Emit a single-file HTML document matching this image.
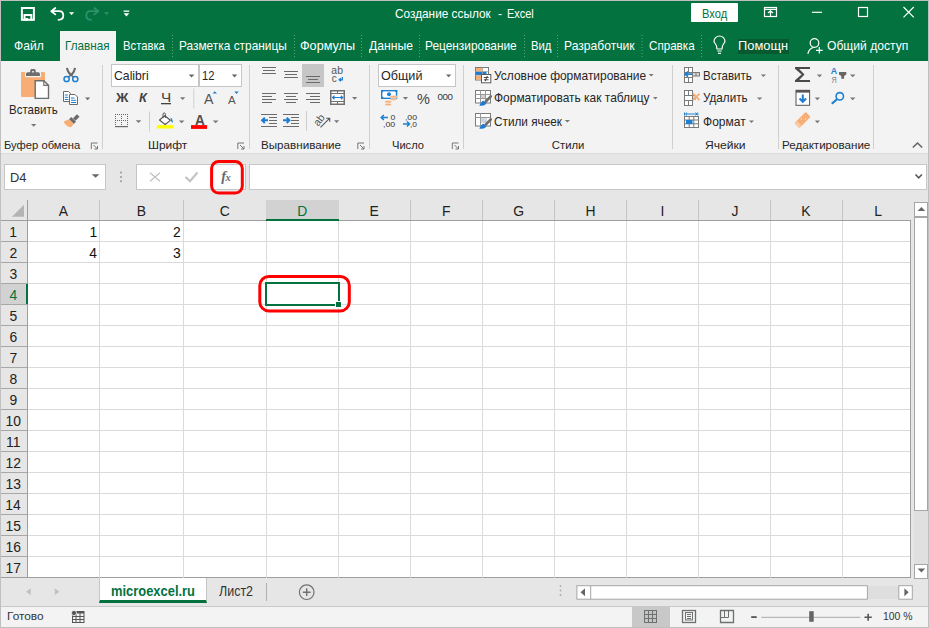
<!DOCTYPE html>
<html><head><meta charset="utf-8">
<style>
*{margin:0;padding:0;box-sizing:border-box}
html,body{width:929px;height:628px;overflow:hidden;background:#e6e6e6;font-family:"Liberation Sans",sans-serif;position:relative}
.a{position:absolute}
.t{position:absolute;white-space:nowrap;line-height:1}
svg{position:absolute;overflow:visible}
</style></head><body>
<!-- title + tabs -->
<div class="a" style="left:0;top:0;width:929px;height:61px;background:#03723f"></div>
<div class="a" style="left:690.7px;top:3px;width:47px;height:18.5px;background:#fff;border-radius:1px"></div>
<div class="a" style="left:60px;top:31px;width:56px;height:30px;background:#f3f3f3"></div>
<div class="a" style="left:738px;top:38.5px;width:50.5px;height:15px;background:#065a2f"></div>
<!-- ribbon -->
<div class="a" style="left:0;top:61px;width:929px;height:92px;background:#f3f3f3"></div>
<div class="a" style="left:0;top:153px;width:929px;height:1px;background:#dcdcdc"></div>
<!-- ribbon separators -->
<div class="a" style="left:102px;top:65px;width:1px;height:84px;background:#cfcfcf"></div>
<div class="a" style="left:249px;top:65px;width:1px;height:84px;background:#cfcfcf"></div>
<div class="a" style="left:369px;top:65px;width:1px;height:84px;background:#cfcfcf"></div>
<div class="a" style="left:463px;top:65px;width:1px;height:84px;background:#cfcfcf"></div>
<div class="a" style="left:672px;top:65px;width:1px;height:84px;background:#cfcfcf"></div>
<div class="a" style="left:778px;top:65px;width:1px;height:84px;background:#cfcfcf"></div>
<div class="a" style="left:873px;top:65px;width:1px;height:84px;background:#cfcfcf"></div>
<!-- font boxes -->
<div class="a" style="left:111px;top:64px;width:88px;height:23px;background:#fff;border:1px solid #c6c6c6"></div>
<div class="a" style="left:199px;top:64px;width:43px;height:23px;background:#fff;border:1px solid #c6c6c6"></div>
<div class="a" style="left:378px;top:64px;width:78px;height:23px;background:#fff;border:1px solid #c6c6c6"></div>
<!-- formula bar -->
<div class="a" style="left:4px;top:164px;width:102px;height:26px;background:#fff;border:1px solid #c6c6c6"></div>
<div class="a" style="left:136px;top:164px;width:110px;height:26px;background:#fff;border:1px solid #c6c6c6"></div>
<div class="a" style="left:249px;top:164px;width:678px;height:26px;background:#fff;border:1px solid #c6c6c6"></div>
<!-- grid -->
<div class="a" style="left:0;top:200px;width:911px;height:21px;background:#e6e6e6"></div>
<div class="a" style="left:28px;top:221px;width:882px;height:357px;background:#fff"></div>
<div class="a" style="left:0;top:221px;width:28px;height:357px;background:#e6e6e6"></div>
<div class="a" style="left:27px;top:200px;width:1px;height:378px;background:#9e9e9e"></div>
<div class="a" style="left:0;top:220px;width:910px;height:1px;background:#9e9e9e"></div>
<div class="a" style="left:910px;top:220px;width:1px;height:358px;background:#9e9e9e"></div>
<div class="a" style="left:0;top:577px;width:911px;height:1px;background:#9e9e9e"></div>
<!-- header separators -->
<div id="hsep"></div>
<div class="a" style="left:99px;top:221px;width:1px;height:357px;background:#dadada"></div>
<div class="a" style="left:99px;top:200px;width:1px;height:20px;background:#c4c4c4"></div>
<div class="a" style="left:183px;top:221px;width:1px;height:357px;background:#dadada"></div>
<div class="a" style="left:183px;top:200px;width:1px;height:20px;background:#c4c4c4"></div>
<div class="a" style="left:266px;top:221px;width:1px;height:357px;background:#dadada"></div>
<div class="a" style="left:266px;top:200px;width:1px;height:20px;background:#c4c4c4"></div>
<div class="a" style="left:338px;top:221px;width:1px;height:357px;background:#dadada"></div>
<div class="a" style="left:338px;top:200px;width:1px;height:20px;background:#c4c4c4"></div>
<div class="a" style="left:410px;top:221px;width:1px;height:357px;background:#dadada"></div>
<div class="a" style="left:410px;top:200px;width:1px;height:20px;background:#c4c4c4"></div>
<div class="a" style="left:482px;top:221px;width:1px;height:357px;background:#dadada"></div>
<div class="a" style="left:482px;top:200px;width:1px;height:20px;background:#c4c4c4"></div>
<div class="a" style="left:554px;top:221px;width:1px;height:357px;background:#dadada"></div>
<div class="a" style="left:554px;top:200px;width:1px;height:20px;background:#c4c4c4"></div>
<div class="a" style="left:626px;top:221px;width:1px;height:357px;background:#dadada"></div>
<div class="a" style="left:626px;top:200px;width:1px;height:20px;background:#c4c4c4"></div>
<div class="a" style="left:698px;top:221px;width:1px;height:357px;background:#dadada"></div>
<div class="a" style="left:698px;top:200px;width:1px;height:20px;background:#c4c4c4"></div>
<div class="a" style="left:770px;top:221px;width:1px;height:357px;background:#dadada"></div>
<div class="a" style="left:770px;top:200px;width:1px;height:20px;background:#c4c4c4"></div>
<div class="a" style="left:842px;top:221px;width:1px;height:357px;background:#dadada"></div>
<div class="a" style="left:842px;top:200px;width:1px;height:20px;background:#c4c4c4"></div>
<div class="a" style="left:28px;top:241px;width:882px;height:1px;background:#dadada"></div>
<div class="a" style="left:1px;top:241px;width:26px;height:1px;background:#a8a8a8"></div>
<div class="a" style="left:28px;top:262px;width:882px;height:1px;background:#dadada"></div>
<div class="a" style="left:1px;top:262px;width:26px;height:1px;background:#a8a8a8"></div>
<div class="a" style="left:28px;top:283px;width:882px;height:1px;background:#dadada"></div>
<div class="a" style="left:1px;top:283px;width:26px;height:1px;background:#a8a8a8"></div>
<div class="a" style="left:28px;top:304px;width:882px;height:1px;background:#dadada"></div>
<div class="a" style="left:1px;top:304px;width:26px;height:1px;background:#a8a8a8"></div>
<div class="a" style="left:28px;top:325px;width:882px;height:1px;background:#dadada"></div>
<div class="a" style="left:1px;top:325px;width:26px;height:1px;background:#a8a8a8"></div>
<div class="a" style="left:28px;top:346px;width:882px;height:1px;background:#dadada"></div>
<div class="a" style="left:1px;top:346px;width:26px;height:1px;background:#a8a8a8"></div>
<div class="a" style="left:28px;top:367px;width:882px;height:1px;background:#dadada"></div>
<div class="a" style="left:1px;top:367px;width:26px;height:1px;background:#a8a8a8"></div>
<div class="a" style="left:28px;top:388px;width:882px;height:1px;background:#dadada"></div>
<div class="a" style="left:1px;top:388px;width:26px;height:1px;background:#a8a8a8"></div>
<div class="a" style="left:28px;top:409px;width:882px;height:1px;background:#dadada"></div>
<div class="a" style="left:1px;top:409px;width:26px;height:1px;background:#a8a8a8"></div>
<div class="a" style="left:28px;top:430px;width:882px;height:1px;background:#dadada"></div>
<div class="a" style="left:1px;top:430px;width:26px;height:1px;background:#a8a8a8"></div>
<div class="a" style="left:28px;top:451px;width:882px;height:1px;background:#dadada"></div>
<div class="a" style="left:1px;top:451px;width:26px;height:1px;background:#a8a8a8"></div>
<div class="a" style="left:28px;top:472px;width:882px;height:1px;background:#dadada"></div>
<div class="a" style="left:1px;top:472px;width:26px;height:1px;background:#a8a8a8"></div>
<div class="a" style="left:28px;top:493px;width:882px;height:1px;background:#dadada"></div>
<div class="a" style="left:1px;top:493px;width:26px;height:1px;background:#a8a8a8"></div>
<div class="a" style="left:28px;top:514px;width:882px;height:1px;background:#dadada"></div>
<div class="a" style="left:1px;top:514px;width:26px;height:1px;background:#a8a8a8"></div>
<div class="a" style="left:28px;top:535px;width:882px;height:1px;background:#dadada"></div>
<div class="a" style="left:1px;top:535px;width:26px;height:1px;background:#a8a8a8"></div>
<div class="a" style="left:28px;top:556px;width:882px;height:1px;background:#dadada"></div>
<div class="a" style="left:1px;top:556px;width:26px;height:1px;background:#a8a8a8"></div>
<!-- selected D header / row 4 header -->
<div class="a" style="left:266px;top:200px;width:73px;height:21px;background:#d2d2d2;border-bottom:2px solid #03723f"></div>
<div class="a" style="left:1px;top:284px;width:27px;height:20px;background:#d2d2d2;border-right:2px solid #03723f"></div>
<!-- selection -->
<div class="a" style="left:265px;top:282px;width:75px;height:24px;border:2px solid #03723f"></div>
<div class="a" style="left:336px;top:302px;width:5px;height:5px;background:#03723f;outline:1px solid #fff"></div>
<!-- sheet tabs -->
<div class="a" style="left:0;top:578px;width:929px;height:28px;background:#e6e6e6"></div>
<div class="a" style="left:99px;top:578px;width:108px;height:25px;background:#fff;border-left:1px solid #c6c6c6;border-right:1px solid #c6c6c6;border-bottom:3px solid #03723f"></div>
<div class="a" style="left:265.5px;top:583px;width:1px;height:18px;background:#b0b0b0"></div>
<!-- status -->
<div class="a" style="left:0;top:606px;width:929px;height:22px;background:#f3f3f3;border-top:1px solid #c9c9c9"></div>
<div class="a" style="left:632px;top:606px;width:38px;height:21px;background:#c8c8c8"></div>
<svg width="929" height="628" style="left:0;top:0" viewBox="0 0 929 628">
<!-- QAT -->
<g stroke="#fff" fill="none" stroke-width="2">
 <rect x="21.9" y="8" width="12" height="11.8"/>
 <path d="M24.5 20.5 V15 H31.3 V20.5"/>
</g>
<rect x="25.5" y="18" width="2.6" height="3" fill="#fff"/>
<g stroke="#fff" fill="none" stroke-width="1.8" stroke-linecap="round" stroke-linejoin="round">
 <path d="M51.3 11.2 L55.3 8 M51.3 11.2 L55.3 14.4 M51.5 11.2 H59 Q63.3 11.2 63.3 15.5 Q63.3 19.8 58.5 19.8"/>
</g>
<path d="M69 12.3 H74.2 L71.6 15.1Z" fill="#fff"/>
<g stroke="#2f906c" fill="none" stroke-width="1.8" stroke-linecap="round" stroke-linejoin="round">
 <path d="M98.3 11.2 L94.3 8 M98.3 11.2 L94.3 14.4 M98.1 11.2 H90.6 Q86.3 11.2 86.3 15.5 Q86.3 19.8 91.1 19.8"/>
</g>
<path d="M104 12.3 H109.2 L106.6 15.1Z" fill="#2f906c"/>
<rect x="123.6" y="10.5" width="5.7" height="1.3" fill="#fff"/>
<path d="M123.6 13.2 H129.3 L126.45 16.6Z" fill="#fff"/>
<!-- window controls -->
<g stroke="#fff" fill="none" stroke-width="1.2">
 <rect x="764.5" y="7.5" width="12" height="9"/>
 <path d="M764.5 9.3 H776.5 M770.5 11 V16.5 M768 13 L770.5 10.8 L773 13"/>
 <path d="M811.9 12.3 H822"/>
 <rect x="858.5" y="7.5" width="9" height="9"/>
 <path d="M903.5 7 L913.8 17.3 M913.8 7 L903.5 17.3"/>
</g>
<!-- tab separators -->
<g stroke="#5c9f78" stroke-width="1" stroke-dasharray="1 2">
 <path d="M172.5 35 V57 M294.5 35 V57 M361.5 35 V57 M419.5 35 V57 M524.5 35 V57 M557.5 35 V57 M642 35 V57 M701.5 35 V57"/>
</g>
<!-- lightbulb -->
<g stroke="#fff" fill="none" stroke-width="1.2">
 <path d="M717 49 Q717 46 715.5 44 Q714 42 714 41.5 A5.5 5.5 0 1 1 725 41.5 Q725 42 723.5 44 Q722 46 722 49 Z"/>
 <path d="M717.3 51 H721.7 M718 53.3 H721"/>
</g>
<!-- person -->
<g stroke="#fff" fill="none" stroke-width="1.2">
 <circle cx="814.5" cy="43" r="4.3"/>
 <path d="M807.8 53.8 Q809 48.5 813.5 47.5"/>
 <path d="M819.3 47 V53.5 M816 50.3 H822.7"/>
</g>

<!-- ===== Ribbon: clipboard ===== -->
<rect x="21" y="72" width="24" height="25" rx="1" fill="#f8ad74"/>
<rect x="25" y="71.5" width="16" height="5.8" rx="1" fill="#f3f3f3"/>
<path d="M26 73.8 Q26 72.2 27.6 72.2 H30.2 V70.6 Q30.2 69.1 31.7 69.1 H34.2 Q35.7 69.1 35.7 70.6 V72.2 H38.3 Q39.9 72.2 39.9 73.8 V75.9 H26Z" fill="#6b6e6b"/>
<rect x="32.2" y="70.9" width="1.6" height="1.6" fill="#f3f3f3"/>
<path d="M35.2 80.7 H43.8 L48.5 85.4 V98.4 H35.2Z" fill="#fff" stroke="#6b6e6b" stroke-width="1.4"/>
<path d="M43.8 80.8 V85.4 H48.4" fill="none" stroke="#6b6e6b" stroke-width="1.1"/>
<path d="M31 124 H36.3 L33.65 126.8Z" fill="#777"/>
<!-- scissors -->
<g fill="none">
 <path d="M67 67.8 Q67.5 72 71 75 Q74.5 72 75 67.8" stroke="#6b6b6b" stroke-width="2"/>
 <path d="M71 75 L68.5 77.2 M71 75 L73.5 77.2" stroke="#6b6b6b" stroke-width="1.6"/>
 <circle cx="66.6" cy="79" r="2.6" stroke="#1e80d0" stroke-width="1.5"/>
 <circle cx="75.3" cy="79" r="2.6" stroke="#1e80d0" stroke-width="1.5"/>
</g>
<!-- copy -->
<path d="M63.5 91.5 H68.5 L70.5 93.5 V101.5 H63.5Z" fill="#fff" stroke="#6b6b6b" stroke-width="1"/>
<path d="M69.5 94.5 H75 L77.5 97 V104.5 H69.5Z" fill="#fff" stroke="#6b6b6b" stroke-width="1"/>
<g fill="#1e80d0">
 <rect x="64.8" y="94.5" width="3" height="1"/><rect x="64.8" y="96.8" width="3.5" height="1"/><rect x="64.8" y="99" width="3.5" height="1"/>
 <rect x="71" y="97.5" width="3.5" height="1"/><rect x="71" y="99.8" width="5.2" height="1"/><rect x="71" y="102" width="5.2" height="1"/>
</g>
<path d="M85 97.6 H90.2 L87.6 100.2Z" fill="#6b6b6b"/>
<!-- format painter -->
<path d="M77 114.3 L79.5 116.8 L75.5 120.8 L73 118.3Z" fill="#6b6b6b"/>
<path d="M71.2 117 L76 121.8 L73.8 124 L69 119.2Z" fill="#6b6b6b"/>
<path d="M69 119.2 L73.8 124 L71 127.3 Q67.5 127 65.5 124.5 Q64 123 63.6 121.8 L65 121Z" fill="#f8ad74"/>
<!-- launcher -->
<g stroke="#777" fill="none" stroke-width="1">
 <path d="M91.3 149 V143 H97.5 M93.5 145 L97.5 149 M97.5 146 V149 H94.5"/>
 <path d="M237.8 149 V143 H244 M240 145 L244 149 M244 146 V149 H241"/>
 <path d="M357.8 149 V143 H364 M360 145 L364 149 M364 146 V149 H361"/>
 <path d="M452.3 149 V143 H458.5 M454.5 145 L458.5 149 M458.5 146 V149 H455.5"/>
</g>

<!-- ===== Font group ===== -->
<path d="M188.7 74.6 H194.4 L191.55 77.4Z" fill="#666"/>
<path d="M231.8 74.6 H237.3 L234.55 77.4Z" fill="#666"/>
<path d="M180 97.2 H185.3 L182.65 100Z" fill="#777"/>
<rect x="193.3" y="88.5" width="1" height="20" fill="#d0d0d0"/>
<rect x="149" y="111.5" width="1" height="20" fill="#d0d0d0"/>
<rect x="161" y="103" width="10" height="1.3" fill="#444"/>
<path d="M212.6 93.6 L214.8 91.2 L217 93.6Z" fill="#1e7bd0"/>
<path d="M234.3 91.4 H238.7 L236.5 93.9Z" fill="#1e7bd0"/>
<!-- borders icon -->
<g fill="#666"><rect x="115" y="114" width="1" height="1"/><rect x="115" y="120" width="1" height="1"/><rect x="117" y="114" width="1" height="1"/><rect x="117" y="120" width="1" height="1"/><rect x="119" y="114" width="1" height="1"/><rect x="119" y="120" width="1" height="1"/><rect x="121" y="114" width="1" height="1"/><rect x="121" y="120" width="1" height="1"/><rect x="123" y="114" width="1" height="1"/><rect x="123" y="120" width="1" height="1"/><rect x="125" y="114" width="1" height="1"/><rect x="125" y="120" width="1" height="1"/><rect x="127" y="114" width="1" height="1"/><rect x="127" y="120" width="1" height="1"/><rect x="115" y="116" width="1" height="1"/><rect x="121" y="116" width="1" height="1"/><rect x="127" y="116" width="1" height="1"/><rect x="115" y="118" width="1" height="1"/><rect x="121" y="118" width="1" height="1"/><rect x="127" y="118" width="1" height="1"/><rect x="115" y="120" width="1" height="1"/><rect x="121" y="120" width="1" height="1"/><rect x="127" y="120" width="1" height="1"/><rect x="115" y="122" width="1" height="1"/><rect x="121" y="122" width="1" height="1"/><rect x="127" y="122" width="1" height="1"/><rect x="115" y="124" width="1" height="1"/><rect x="121" y="124" width="1" height="1"/><rect x="127" y="124" width="1" height="1"/></g>
<rect x="115" y="126" width="13" height="1.2" fill="#6b6b6b"/>
<path d="M135.7 120.3 H141.3 L138.5 123.1Z" fill="#777"/>
<!-- fill color -->
<path d="M164.8 115.8 L170.3 120.3 L165.2 124.5 L159.5 120Z" fill="#fff" stroke="#555" stroke-width="1.1" stroke-linejoin="round"/>
<path d="M163 118 V114.2 Q163 113 164.2 113 Q165.4 113 165.4 114.2 V118" fill="none" stroke="#555" stroke-width="1"/>
<path d="M170.5 117.5 Q173.3 119.5 172.6 123 Q170.5 121.5 170.5 117.5Z" fill="#1e80d0"/>
<rect x="156.8" y="125.1" width="16.4" height="3.4" fill="#ffff00"/>
<path d="M178.9 120.5 H184.4 L181.65 123.3Z" fill="#777"/>
<!-- font color -->
<rect x="191" y="125.1" width="16.1" height="3.8" fill="#ff0000"/>
<path d="M212.8 120.5 H218.5 L215.65 123.3Z" fill="#777"/>

<!-- ===== Alignment ===== -->
<rect x="302" y="64" width="22" height="23" fill="#c6c6c6"/>
<rect x="262" y="67" width="14" height="1" fill="#6b6b6b"/>
<rect x="263" y="70" width="12" height="1" fill="#6b6b6b"/>
<rect x="262" y="73" width="14" height="1" fill="#6b6b6b"/>
<rect x="284" y="71" width="14" height="1" fill="#6b6b6b"/>
<rect x="285" y="74" width="12" height="1" fill="#6b6b6b"/>
<rect x="284" y="77" width="14" height="1" fill="#6b6b6b"/>
<rect x="306" y="76" width="14" height="1" fill="#6b6b6b"/>
<rect x="308" y="79" width="10" height="1" fill="#6b6b6b"/>
<rect x="306" y="82" width="14" height="1" fill="#6b6b6b"/>
<rect x="262" y="93" width="14" height="1" fill="#6b6b6b"/>
<rect x="262" y="96" width="10" height="1" fill="#6b6b6b"/>
<rect x="262" y="99" width="14" height="1" fill="#6b6b6b"/>
<rect x="262" y="102" width="10" height="1" fill="#6b6b6b"/>
<rect x="284" y="93" width="14" height="1" fill="#6b6b6b"/>
<rect x="286" y="96" width="10" height="1" fill="#6b6b6b"/>
<rect x="284" y="99" width="14" height="1" fill="#6b6b6b"/>
<rect x="286" y="102" width="10" height="1" fill="#6b6b6b"/>
<rect x="306" y="93" width="14" height="1" fill="#6b6b6b"/>
<rect x="310" y="96" width="10" height="1" fill="#6b6b6b"/>
<rect x="306" y="99" width="14" height="1" fill="#6b6b6b"/>
<rect x="310" y="102" width="10" height="1" fill="#6b6b6b"/>
<rect x="261" y="114" width="16" height="1" fill="#6b6b6b"/>
<rect x="269" y="117" width="8" height="1" fill="#6b6b6b"/>
<rect x="269" y="120" width="8" height="1" fill="#6b6b6b"/>
<rect x="269" y="123" width="8" height="1" fill="#6b6b6b"/>
<rect x="261" y="126" width="16" height="1" fill="#6b6b6b"/>
<rect x="283" y="114" width="16" height="1" fill="#6b6b6b"/>
<rect x="291" y="117" width="8" height="1" fill="#6b6b6b"/>
<rect x="291" y="120" width="8" height="1" fill="#6b6b6b"/>
<rect x="291" y="123" width="8" height="1" fill="#6b6b6b"/>
<rect x="283" y="126" width="16" height="1" fill="#6b6b6b"/>
<path d="M262 120.3 H268 M264.8 117.6 L262.1 120.3 L264.8 123" stroke="#1e7bd0" stroke-width="2" fill="none"/>
<path d="M283 120.3 H289.5 M286.7 117.6 L289.4 120.3 L286.7 123" stroke="#1e7bd0" stroke-width="2" fill="none"/>
<rect x="330.75" y="90.75" width="13.5" height="13.5" fill="#fff" stroke="#707070" stroke-width="1.5"/>
<path d="M330.8 93.5 H344.2 M330.8 101.5 H344.2 M337.5 90.8 V93.5 M337.5 101.5 V104.2" stroke="#707070" stroke-width="1" fill="none"/>
<path d="M332.5 97.5 H342.8 M334.5 95.7 L332.6 97.5 L334.5 99.3 M340.8 95.7 L342.7 97.5 L340.8 99.3" stroke="#1e7bd0" stroke-width="1.2" fill="none"/>
<path d="M352 97 H357.3 L354.65 99.8Z" fill="#777"/>
<rect x="306" y="111" width="1" height="20" fill="#d0d0d0"/>
<g fill="#555" font-family="Liberation Sans"><text x="331.3" y="74.5" font-size="10" transform="translate(331.3 0) scale(1.05 1) translate(-331.3 0)">ab</text><text x="331.8" y="82.2" font-size="10">c</text></g>
<path d="M342.3 77 V79.8 H339.3 M340.8 78.3 L339.2 79.8 L340.8 81.3" stroke="#1e7bd0" stroke-width="1.3" fill="none"/>
<g transform="translate(319.5 119.5) rotate(-52)" fill="#555"><text x="-6.5" y="3.5" font-family="Liberation Sans" font-size="10.5">ab</text></g>
<path d="M320.5 127.3 L329.5 118.3 M326.2 118.2 H329.7 V121.7" stroke="#555" stroke-width="1.1" fill="none"/>
<path d="M334 120.3 H339.3 L336.65 123.1Z" fill="#777"/>
<!-- ===== Number ===== -->
<path d="M446 74.5 H451.3 L448.65 77.3Z" fill="#666"/>
<rect x="381.7" y="90.7" width="14.8" height="7.6" fill="#fff" stroke="#1e80d0" stroke-width="1.4"/>
<path d="M381 90 H384.5 L381 93.5Z M397.2 90 H393.7 L397.2 93.5Z M381 98.8 H384.5 L381 95.3Z" fill="#1e80d0"/>
<circle cx="389" cy="94.2" r="2" fill="#1e80d0"/>
<g fill="#f8ad74" stroke="#f3f3f3" stroke-width="0.5"><ellipse cx="393.6" cy="96.8" rx="3.7" ry="1.3"/><ellipse cx="393.6" cy="99.3" rx="3.2" ry="1.1"/><ellipse cx="388.2" cy="101.8" rx="3.5" ry="1.3"/><ellipse cx="388.2" cy="104.5" rx="3.3" ry="1.2"/></g>
<path d="M402.8 97 H408.1 L405.45 99.8Z" fill="#777"/>
<text x="417" y="104" font-family="Liberation Sans" font-size="14.5" fill="#444">%</text>
<text x="437.5" y="100.3" font-family="Liberation Sans" font-size="9.8" fill="#3a3a3a" letter-spacing="-0.4">000</text>
<g font-family="Liberation Sans" font-size="8" fill="#333">
 <text x="390.4" y="119.8" textLength="4.8" lengthAdjust="spacingAndGlyphs">0</text>
 <text x="383" y="126.7" textLength="12.2" lengthAdjust="spacingAndGlyphs">,00</text>
 <text x="404.9" y="119.8" textLength="12.1" lengthAdjust="spacingAndGlyphs">,00</text>
 <text x="410" y="126.7" textLength="7" lengthAdjust="spacingAndGlyphs">,0</text>
</g>
<g stroke="#1e80d0" stroke-width="1.6" fill="none">
 <path d="M381.3 117.5 H388 M383.8 115 L381.3 117.5 L383.8 120"/>
 <path d="M403 124 H409.5 M407 121.5 L409.5 124 L407 126.5"/>
</g>
<!-- ===== Styles ===== -->
<g>
 <rect x="475.5" y="67.5" width="13" height="12.5" fill="#fff" stroke="#7a7a7a" stroke-width="1"/>
 <rect x="476" y="68" width="6.5" height="3.5" fill="#f8ad74"/>
 <rect x="476" y="71.5" width="10.5" height="3.5" fill="#1e7bd0"/>
 <rect x="476" y="75.5" width="6.5" height="4" fill="#f8ad74"/>
 <path d="M482.5 67.5 V74 M475.5 71.5 H488.5 M475.5 75.3 H481" stroke="#aaa" stroke-width="0.8"/>
 <rect x="481.5" y="74.5" width="9.3" height="8.3" fill="#fff" stroke="#5a5a5a" stroke-width="1"/>
 <path d="M483.8 77.5 H488.6 M483.8 79.8 H488.6 M487.3 76 L485.2 81.3" stroke="#333" stroke-width="0.9"/>
</g>
<g>
 <rect x="475.5" y="90.5" width="15" height="12.5" fill="#fff" stroke="#7a7a7a" stroke-width="1"/>
 <path d="M475.5 94.5 H490.5 M475.5 98.5 H490.5 M480.5 90.5 V103 M485.5 90.5 V103" stroke="#9a9a9a" stroke-width="1"/>
 <rect x="481" y="95" width="4" height="3" fill="#d0d0d0"/>
 <path d="M484 101.5 L490.8 94.5 L492 95.8 L492 97 L486 103.2Z" fill="#6e6e6e"/>
 <path d="M479.3 105.8 Q480.5 101.8 483.2 100.6 L486.3 103.5 Q485 106 479.3 105.8Z" fill="#1e7bd0"/>
</g>
<g>
 <rect x="475.5" y="113.5" width="15" height="12.5" fill="#fff" stroke="#7a7a7a" stroke-width="1"/>
 <path d="M475.5 117.5 H490.5 M480.5 113.5 V126" stroke="#9a9a9a" stroke-width="1"/>
 <rect x="481" y="118" width="6" height="5" fill="#d9d9d9"/>
 <circle cx="482.8" cy="120" r="0.7" fill="#8cc4ee"/><circle cx="485.2" cy="121.5" r="0.7" fill="#8cc4ee"/>
 <path d="M484 124.5 L490.8 117.5 L492 118.8 L492 120 L486 126.2Z" fill="#6e6e6e"/>
 <path d="M479.3 128.8 Q480.5 124.8 483.2 123.6 L486.3 126.5 Q485 129 479.3 128.8Z" fill="#1e7bd0"/>
</g>
<path d="M648.7 74 H653.7 L651.2 76.6Z" fill="#777"/>
<path d="M653 97 H657.7 L655.35 99.6Z" fill="#777"/>
<path d="M564.7 120 H570 L567.35 122.6Z" fill="#777"/>

<!-- ===== Cells ===== -->
<g stroke="#7a7a7a" stroke-width="1" fill="#fff">
 <rect x="684.5" y="67.5" width="8" height="15"/>
 <rect x="692.5" y="72.5" width="7" height="3.5" fill="#d6d6d6"/>
 <path d="M684.5 72.5 H692.5 M684.5 77.5 H692.5 M688.5 67.5 V72.5 M688.5 77.5 V82.5 M696 72.5 V76" fill="none"/>
 <rect x="684.5" y="90.5" width="8" height="15"/>
 <rect x="692.5" y="95.5" width="3" height="3.5" fill="#d6d6d6"/>
 <path d="M684.5 95.5 H692.5 M684.5 100.5 H692.5 M688.5 90.5 V95.5 M688.5 100.5 V105.5" fill="none"/>
 <rect x="684.5" y="116.5" width="14" height="11"/>
 <path d="M684.5 120 H698.5 M684.5 123.8 H698.5 M689.2 116.5 V127.5 M693.8 116.5 V127.5" fill="none"/>
</g>
<path d="M692 74.2 H685.5 M688 71.7 L685.3 74.2 L688 76.7" stroke="#1e80d0" stroke-width="1.8" fill="none"/>
<path d="M693 93.6 L699.5 100.2 M699.5 93.6 L693 100.2" stroke="#f8ad74" stroke-width="1.9"/>
<g stroke="#1e80d0" stroke-width="1" fill="none"><path d="M685.5 114 H697 M687 112.6 L685.5 114 L687 115.4 M695.5 112.6 L697 114 L695.5 115.4 M684.5 112.5 V115.5 M697.8 112.5 V115.5"/></g>
<rect x="686" y="120" width="6.5" height="4" fill="#1e80d0"/>
<path d="M760.8 74.5 H766 L763.4 77.1Z" fill="#777"/>
<path d="M757 97.5 H762.3 L759.65 100.1Z" fill="#777"/>
<path d="M749 120.5 H754 L751.5 123.1Z" fill="#777"/>

<!-- ===== Editing ===== -->
<path d="M795 67 H810 V69 H799.2 L804.5 74.5 L799.2 80 H810 V82 H795 V80.2 L801.6 74.5 L795 68.8Z" fill="#4a4a4a"/>
<path d="M816.8 74.5 H822.2 L819.5 77.3Z" fill="#777"/>
<text x="830.8" y="73.8" font-family="Liberation Sans" font-weight="bold" font-size="9" fill="#1e80d0" textLength="6.4" lengthAdjust="spacingAndGlyphs">A</text>
<text x="831.4" y="83" font-family="Liberation Sans" font-size="9.2" fill="#808080" textLength="5.2" lengthAdjust="spacingAndGlyphs">Я</text>
<path d="M839 72 H846.3 V74.5 L844.1 76 V78.7 H841.3 V76 L839 74.5Z" fill="#666"/>
<path d="M850 74.5 H855.4 L852.7 77.3Z" fill="#777"/>
<rect x="796" y="90.3" width="13.6" height="15" fill="#fff" stroke="#555" stroke-width="1"/>
<rect x="796" y="90" width="14" height="2.6" fill="#555"/>
<path d="M802.8 94.5 V101.5 M799.5 98.5 L802.8 101.8 L806.1 98.5" stroke="#1e7bd0" stroke-width="2" fill="none"/>
<path d="M814.8 97.5 H820 L817.4 100.3Z" fill="#777"/>
<circle cx="839.8" cy="96.3" r="3.7" fill="none" stroke="#1e80d0" stroke-width="1.6"/>
<path d="M837 99.2 L831.8 103.8" stroke="#1e80d0" stroke-width="2.2"/>
<path d="M850 97.5 H855.4 L852.7 100.3Z" fill="#777"/>
<g transform="translate(802.5 120) rotate(-45)">
 <rect x="-8" y="-3.5" width="16" height="7" rx="1.3" fill="#f8ad74"/>
 <rect x="-8" y="-3.5" width="3.5" height="7" rx="1.3" fill="#fbc9a0"/>
 <circle cx="0" cy="-1.5" r="0.6" fill="#fff"/><circle cx="3" cy="1.5" r="0.6" fill="#fff"/>
</g>
<path d="M814.8 120.5 H820 L817.4 123.3Z" fill="#777"/>
<path d="M912.8 147.5 L917.5 143 L922.2 147.5" stroke="#666" stroke-width="1.6" fill="none"/>

<!-- ===== formula bar ===== -->
<path d="M91.7 174.3 H99.4 L95.55 177.8Z" fill="#666"/>
<g fill="#999"><circle cx="121" cy="172.5" r="1"/><circle cx="121" cy="177" r="1"/><circle cx="121" cy="181.3" r="1"/></g>
<path d="M150 172.8 L160 181.3 M160 172.8 L150 181.3" stroke="#c3c3c3" stroke-width="1.4"/>
<path d="M185.5 177 L190 181.2 L197.5 172.5" stroke="#c3c3c3" stroke-width="2.2" fill="none"/>
<text x="221.3" y="180.8" font-family="Liberation Serif" font-style="italic" font-weight="bold" font-size="14.5" fill="#6a6a6a">f</text>
<text x="225.6" y="181.2" font-family="Liberation Serif" font-style="italic" font-weight="bold" font-size="10.5" fill="#6a6a6a">x</text>
<path d="M915.5 174.5 L918.7 177.8 L921.9 174.5" stroke="#555" stroke-width="1.5" fill="none"/>
<rect x="211.6" y="161.6" width="30.7" height="31.5" rx="7" fill="none" stroke="#ff0000" stroke-width="3"/>

<!-- ===== grid ===== -->
<path d="M24 204.7 V216.8 H11.9Z" fill="#b4b4b4"/>
<rect x="259.8" y="276.5" width="89.5" height="34.4" rx="9" fill="none" stroke="#ff0000" stroke-width="3"/>

<!-- ===== sheet bar ===== -->
<path d="M30.7 588.3 V595.1 L26 591.7Z" fill="#c0c0c0"/>
<path d="M54.8 588.3 V595.1 L59.4 591.7Z" fill="#c0c0c0"/>
<circle cx="306.7" cy="592.2" r="7.3" fill="none" stroke="#707070" stroke-width="1.2"/>
<path d="M306.7 588.3 V596.1 M302.8 592.2 H310.6" stroke="#707070" stroke-width="1.4"/>
<g fill="#aaa"><circle cx="560.5" cy="586" r="0.9"/><circle cx="560.5" cy="590.5" r="0.9"/><circle cx="560.5" cy="595" r="0.9"/></g>
<rect x="576.9" y="585.7" width="290.5" height="13.5" fill="#fff" stroke="#a6a6a6" stroke-width="1"/>
<path d="M590.7 585.7 V599.2" stroke="#a6a6a6"/>
<path d="M585 588.3 V596.3 L580.5 592.3Z" fill="#666"/>
<rect x="868" y="586" width="30" height="13" fill="#dedede"/>
<rect x="898.8" y="585.7" width="13.5" height="13.5" fill="#fff" stroke="#a6a6a6" stroke-width="1"/>
<path d="M904.4 588.3 V596.3 L908.7 592.3Z" fill="#666"/>
<!-- vscroll -->
<rect x="914" y="202" width="14" height="376" fill="#e0e0e0"/>
<rect x="914.5" y="202.5" width="13" height="14" fill="#fff" stroke="#a6a6a6" stroke-width="1"/>
<path d="M917.6 210.9 H925.2 L921.4 206.9Z" fill="#666"/>
<rect x="914.5" y="217.5" width="13" height="293" fill="#fff" stroke="#a6a6a6" stroke-width="1"/>
<rect x="914.5" y="564.5" width="13" height="14" fill="#fff" stroke="#a6a6a6" stroke-width="1"/>
<path d="M917.6 568.5 H925.2 L921.4 572.5Z" fill="#666"/>

<!-- ===== status bar ===== -->
<rect x="72.5" y="611.5" width="11.5" height="11" fill="none" stroke="#555" stroke-width="1"/>
<rect x="75" y="611" width="9" height="2.5" fill="#555"/>
<path d="M72.5 616.5 H84 M72.5 619.5 H84 M76 613 V622.5 M80 613 V622.5" stroke="#555" stroke-width="1"/>
<circle cx="74" cy="613" r="2.6" fill="#555" stroke="#f3f3f3" stroke-width="0.8"/>
<g fill="#6e726e">
 <rect x="644" y="610" width="13" height="13"/>
</g>
<g fill="#c4c4c4"><rect x="645" y="611" width="3" height="3"/><rect x="645" y="615" width="3" height="3"/><rect x="645" y="619" width="3" height="3"/><rect x="649" y="611" width="3" height="3"/><rect x="649" y="615" width="3" height="3"/><rect x="649" y="619" width="3" height="3"/><rect x="653" y="611" width="3" height="3"/><rect x="653" y="615" width="3" height="3"/><rect x="653" y="619" width="3" height="3"/></g>
<g stroke="#6e726e" fill="none">
 <rect x="682.5" y="610.5" width="13" height="12" stroke-width="1.3"/>
 <rect x="685.5" y="612.5" width="7" height="7.5" stroke-width="1"/>
 <path d="M687 614.5 H691 M687 616.5 H691 M687 618.5 H691" stroke-width="1"/>
 <path d="M720.5 610.5 H733.5 V622.5 H720.5Z" stroke-width="1.3"/>
 <path d="M720.5 617.5 H728.5 V610.5 M724.5 610.5 V617.5" stroke-width="1"/>
</g>
<rect x="751.2" y="616.2" width="5.5" height="1.8" fill="#555"/>
<rect x="761.4" y="616.8" width="99" height="1" fill="#a8a8a8"/>
<rect x="809.2" y="611.2" width="4.5" height="10.6" fill="#666"/>
<path d="M864.5 617.3 H871.8 M868.15 613.7 V620.8" stroke="#555" stroke-width="1.6"/>
</svg>

<div class="t" style="left:394.91px;top:8px;font-size:12.4px;color:#ffffff;font-weight:normal;font-style:normal;transform:scaleX(0.9538);transform-origin:0 0;">Создание ссылок</div>
<div class="t" style="left:498.10px;top:8px;font-size:12.4px;color:#ffffff;font-weight:normal;font-style:normal;">-</div>
<div class="t" style="left:507.42px;top:8px;font-size:12.4px;color:#ffffff;font-weight:normal;font-style:normal;transform:scaleX(0.8824);transform-origin:0 0;">Excel</div>
<div class="t" style="left:701.91px;top:8px;font-size:12.4px;color:#03723f;font-weight:normal;font-style:normal;transform:scaleX(0.8962);transform-origin:0 0;">Вход</div>
<div class="t" style="left:13.59px;top:40px;font-size:12.4px;color:#ffffff;font-weight:normal;font-style:normal;transform:scaleX(0.9767);transform-origin:0 0;">Файл</div>
<div class="t" style="left:65.46px;top:40px;font-size:12.4px;color:#03723f;font-weight:normal;font-style:normal;transform:scaleX(0.9441);transform-origin:0 0;">Главная</div>
<div class="t" style="left:123.40px;top:40px;font-size:12.4px;color:#ffffff;font-weight:normal;font-style:normal;transform:scaleX(0.9082);transform-origin:0 0;">Вставка</div>
<div class="t" style="left:179.25px;top:40px;font-size:12.4px;color:#ffffff;font-weight:normal;font-style:normal;transform:scaleX(0.9589);transform-origin:0 0;">Разметка страницы</div>
<div class="t" style="left:300.37px;top:40px;font-size:12.4px;color:#ffffff;font-weight:normal;font-style:normal;transform:scaleX(1.0212);transform-origin:0 0;">Формулы</div>
<div class="t" style="left:368.60px;top:40px;font-size:12.4px;color:#ffffff;font-weight:normal;font-style:normal;transform:scaleX(0.9831);transform-origin:0 0;">Данные</div>
<div class="t" style="left:425.35px;top:40px;font-size:12.4px;color:#ffffff;font-weight:normal;font-style:normal;transform:scaleX(0.9586);transform-origin:0 0;">Рецензирование</div>
<div class="t" style="left:530.60px;top:40px;font-size:12.4px;color:#ffffff;font-weight:normal;font-style:normal;transform:scaleX(0.9119);transform-origin:0 0;">Вид</div>
<div class="t" style="left:564.23px;top:40px;font-size:12.4px;color:#ffffff;font-weight:normal;font-style:normal;transform:scaleX(0.9780);transform-origin:0 0;">Разработчик</div>
<div class="t" style="left:648.72px;top:40px;font-size:12.4px;color:#ffffff;font-weight:normal;font-style:normal;transform:scaleX(0.9382);transform-origin:0 0;">Справка</div>
<div class="t" style="left:738.47px;top:40px;font-size:12.4px;color:#ffffff;font-weight:normal;font-style:normal;transform:scaleX(1.0383);transform-origin:0 0;">Помощн</div>
<div class="t" style="left:826.82px;top:40px;font-size:12.4px;color:#ffffff;font-weight:normal;font-style:normal;transform:scaleX(0.9774);transform-origin:0 0;">Общий доступ</div>
<div class="t" style="left:8.58px;top:104px;font-size:12.4px;color:#262626;font-weight:normal;font-style:normal;transform:scaleX(0.9283);transform-origin:0 0;">Вставить</div>
<div class="t" style="left:3.90px;top:140px;font-size:11.3px;color:#262626;font-weight:normal;font-style:normal;transform:scaleX(0.9931);transform-origin:0 0;">Буфер обмена</div>
<div class="t" style="left:113.99px;top:70px;font-size:12.4px;color:#262626;font-weight:normal;font-style:normal;transform:scaleX(0.9867);transform-origin:0 0;">Calibri</div>
<div class="t" style="left:202.01px;top:70px;font-size:12.4px;color:#262626;font-weight:normal;font-style:normal;transform:scaleX(0.9067);transform-origin:0 0;">12</div>
<div class="t" style="left:147.74px;top:140px;font-size:11.3px;color:#262626;font-weight:normal;font-style:normal;transform:scaleX(1.0585);transform-origin:0 0;">Шрифт</div>
<div class="t" style="left:260.87px;top:140px;font-size:11.3px;color:#262626;font-weight:normal;font-style:normal;transform:scaleX(1.0292);transform-origin:0 0;">Выравнивание</div>
<div class="t" style="left:381.10px;top:70px;font-size:12.4px;color:#262626;font-weight:normal;font-style:normal;transform:scaleX(1.0163);transform-origin:0 0;">Общий</div>
<div class="t" style="left:391.72px;top:140px;font-size:11.3px;color:#262626;font-weight:normal;font-style:normal;transform:scaleX(0.9841);transform-origin:0 0;">Число</div>
<div class="t" style="left:494.06px;top:70px;font-size:12.4px;color:#262626;font-weight:normal;font-style:normal;transform:scaleX(0.9653);transform-origin:0 0;">Условное форматирование</div>
<div class="t" style="left:493.70px;top:92px;font-size:12.4px;color:#262626;font-weight:normal;font-style:normal;transform:scaleX(0.9651);transform-origin:0 0;">Форматировать как таблицу</div>
<div class="t" style="left:493.71px;top:116px;font-size:12.4px;color:#262626;font-weight:normal;font-style:normal;transform:scaleX(0.9494);transform-origin:0 0;">Стили ячеек</div>
<div class="t" style="left:551.84px;top:140px;font-size:11.3px;color:#262626;font-weight:normal;font-style:normal;">Стили</div>
<div class="t" style="left:702.68px;top:70px;font-size:12.4px;color:#262626;font-weight:normal;font-style:normal;transform:scaleX(0.9283);transform-origin:0 0;">Вставить</div>
<div class="t" style="left:702.77px;top:92px;font-size:12.4px;color:#262626;font-weight:normal;font-style:normal;transform:scaleX(0.9424);transform-origin:0 0;">Удалить</div>
<div class="t" style="left:703.00px;top:116px;font-size:12.4px;color:#262626;font-weight:normal;font-style:normal;transform:scaleX(0.9716);transform-origin:0 0;">Формат</div>
<div class="t" style="left:704.62px;top:140px;font-size:11.3px;color:#262626;font-weight:normal;font-style:normal;transform:scaleX(1.0716);transform-origin:0 0;">Ячейки</div>
<div class="t" style="left:781.57px;top:140px;font-size:11.3px;color:#262626;font-weight:normal;font-style:normal;transform:scaleX(1.0263);transform-origin:0 0;">Редактирование</div>
<div class="t" style="left:10.47px;top:172px;font-size:12.4px;color:#333;font-weight:normal;font-style:normal;transform:scaleX(1.0389);transform-origin:0 0;">D4</div>
<div class="t" style="left:110.62px;top:585px;font-size:13.9px;color:#03723f;font-weight:bold;font-style:normal;transform:scaleX(0.9299);transform-origin:0 0;">microexcel.ru</div>
<div class="t" style="left:219.20px;top:585px;font-size:13.9px;color:#333;font-weight:normal;font-style:normal;transform:scaleX(0.8983);transform-origin:0 0;">Лист2</div>
<div class="t" style="left:6.80px;top:611px;font-size:11.3px;color:#333;font-weight:normal;font-style:normal;transform:scaleX(1.0497);transform-origin:0 0;">Готово</div>
<div class="t" style="left:883.27px;top:611px;font-size:11.3px;color:#333;font-weight:normal;font-style:normal;transform:scaleX(0.9217);transform-origin:0 0;">100 %</div>
<div class="t" style="left:115.94px;top:92px;font-size:12.4px;color:#444;font-weight:bold;font-style:normal;transform:scaleX(1.1045);transform-origin:0 0;">Ж</div>
<div class="t" style="left:138.67px;top:92px;font-size:12.4px;color:#444;font-weight:bold;font-style:italic;transform:scaleX(1.0351);transform-origin:0 0;">К</div>
<div class="t" style="left:160.92px;top:92px;font-size:12.4px;color:#444;font-weight:normal;font-style:normal;transform:scaleX(1.2407);transform-origin:0 0;">Ч</div>
<div class="t" style="left:204.20px;top:93px;font-size:13.9px;color:#555;font-weight:normal;font-style:normal;transform:scaleX(1.0201);transform-origin:0 0;">A</div>
<div class="t" style="left:227.50px;top:95px;font-size:11.3px;color:#555;font-weight:normal;font-style:normal;transform:scaleX(1.0170);transform-origin:0 0;">A</div>
<div class="t" style="left:194.53px;top:114px;font-size:13.9px;color:#505050;font-weight:bold;font-style:normal;transform:scaleX(0.9733);transform-origin:0 0;">A</div>
<div class="t" style="left:58.84px;top:205px;font-size:13.9px;color:#222;font-weight:normal;font-style:normal;">A</div>
<div class="t" style="left:136.64px;top:205px;font-size:13.9px;color:#222;font-weight:normal;font-style:normal;">B</div>
<div class="t" style="left:219.86px;top:205px;font-size:13.9px;color:#222;font-weight:normal;font-style:normal;">C</div>
<div class="t" style="left:297.22px;top:205px;font-size:13.9px;color:#03723f;font-weight:normal;font-style:normal;">D</div>
<div class="t" style="left:369.57px;top:205px;font-size:13.9px;color:#222;font-weight:normal;font-style:normal;">E</div>
<div class="t" style="left:441.91px;top:205px;font-size:13.9px;color:#222;font-weight:normal;font-style:normal;">F</div>
<div class="t" style="left:513.22px;top:205px;font-size:13.9px;color:#222;font-weight:normal;font-style:normal;">G</div>
<div class="t" style="left:585.43px;top:205px;font-size:13.9px;color:#222;font-weight:normal;font-style:normal;">H</div>
<div class="t" style="left:660.55px;top:205px;font-size:13.9px;color:#222;font-weight:normal;font-style:normal;">I</div>
<div class="t" style="left:731.44px;top:205px;font-size:13.9px;color:#222;font-weight:normal;font-style:normal;">J</div>
<div class="t" style="left:801.36px;top:205px;font-size:13.9px;color:#222;font-weight:normal;font-style:normal;">K</div>
<div class="t" style="left:874.26px;top:205px;font-size:13.9px;color:#222;font-weight:normal;font-style:normal;">L</div>
<div class="t" style="left:9.37px;top:226px;font-size:13.9px;color:#222;font-weight:normal;font-style:normal;">1</div>
<div class="t" style="left:9.51px;top:247px;font-size:13.9px;color:#222;font-weight:normal;font-style:normal;">2</div>
<div class="t" style="left:9.58px;top:268px;font-size:13.9px;color:#222;font-weight:normal;font-style:normal;">3</div>
<div class="t" style="left:9.58px;top:289px;font-size:13.9px;color:#03723f;font-weight:normal;font-style:normal;">4</div>
<div class="t" style="left:9.51px;top:310px;font-size:13.9px;color:#222;font-weight:normal;font-style:normal;">5</div>
<div class="t" style="left:9.44px;top:331px;font-size:13.9px;color:#222;font-weight:normal;font-style:normal;">6</div>
<div class="t" style="left:9.51px;top:352px;font-size:13.9px;color:#222;font-weight:normal;font-style:normal;">7</div>
<div class="t" style="left:9.51px;top:373px;font-size:13.9px;color:#222;font-weight:normal;font-style:normal;">8</div>
<div class="t" style="left:9.58px;top:394px;font-size:13.9px;color:#222;font-weight:normal;font-style:normal;">9</div>
<div class="t" style="left:5.43px;top:415px;font-size:13.9px;color:#222;font-weight:normal;font-style:normal;">10</div>
<div class="t" style="left:6.02px;top:436px;font-size:13.9px;color:#222;font-weight:normal;font-style:normal;">11</div>
<div class="t" style="left:5.50px;top:457px;font-size:13.9px;color:#222;font-weight:normal;font-style:normal;">12</div>
<div class="t" style="left:5.43px;top:478px;font-size:13.9px;color:#222;font-weight:normal;font-style:normal;">13</div>
<div class="t" style="left:5.36px;top:499px;font-size:13.9px;color:#222;font-weight:normal;font-style:normal;">14</div>
<div class="t" style="left:5.43px;top:520px;font-size:13.9px;color:#222;font-weight:normal;font-style:normal;">15</div>
<div class="t" style="left:5.43px;top:541px;font-size:13.9px;color:#222;font-weight:normal;font-style:normal;">16</div>
<div class="t" style="left:5.50px;top:562px;font-size:13.9px;color:#222;font-weight:normal;font-style:normal;">17</div>
<div class="t" style="left:89.41px;top:226px;font-size:13.9px;color:#111;font-weight:normal;font-style:normal;">1</div>
<div class="t" style="left:173.11px;top:226px;font-size:13.9px;color:#111;font-weight:normal;font-style:normal;">2</div>
<div class="t" style="left:89.13px;top:247px;font-size:13.9px;color:#111;font-weight:normal;font-style:normal;">4</div>
<div class="t" style="left:172.97px;top:247px;font-size:13.9px;color:#111;font-weight:normal;font-style:normal;">3</div>
<div class="a" style="left:0;top:0;width:929px;height:628px;border:1px solid #c0c0c0"></div>
</body></html>
